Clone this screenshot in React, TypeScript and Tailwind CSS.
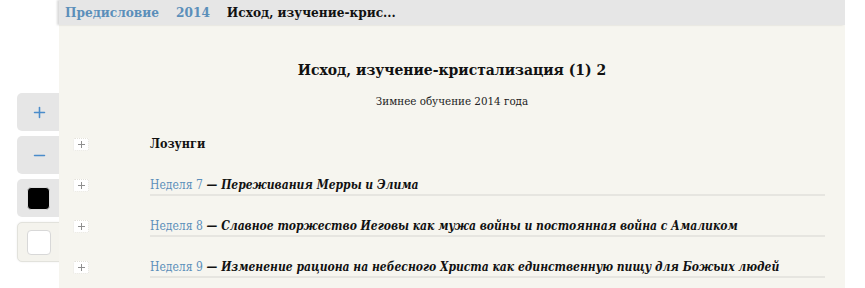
import { Plus, Minus } from "lucide-react"

const serif = { fontFamily: '"DejaVu Serif Condensed", "DejaVu Serif", Georgia, serif' }

const weeks = [
    { n: 7, title: "Переживания Мерры и Элима" },
    { n: 8, title: "Славное торжество Иеговы как мужа войны и постоянная война с Амаликом" },
    { n: 9, title: "Изменение рациона на небесного Христа как единственную пищу для Божьих людей" },
]

function ExpandBox() {
    return (
        <div className="flex h-[13px] w-[16px] items-center justify-center rounded-[2px] border border-dotted border-[#e4e2da] bg-white">
            <svg width="7" height="7" viewBox="0 0 7 7">
                <path d="M3.5 0v7M0 3.5h7" stroke="#8f8f8f" strokeWidth="1" />
            </svg>
        </div>
    )
}

export default function App() {
    return (
        <div className="relative h-[288px] w-[865px] overflow-hidden bg-white" style={serif}>
            {/* Панель инструментов слева */}
            <div className="absolute left-[17px] top-[93px] flex w-[60px] flex-col gap-[5px]">
                <button className="flex h-[38px] items-center rounded-[5px] bg-[#e6e6e6] pl-[14px]">
                    <Plus className="size-[17px] text-[#4a8ccb]" strokeWidth={2.2} />
                </button>
                <button className="flex h-[38px] items-center rounded-[5px] bg-[#e6e6e6] pl-[14px]">
                    <Minus className="size-[17px] text-[#4a8ccb]" strokeWidth={2.2} />
                </button>
                <button className="flex h-[38px] items-center rounded-[5px] bg-[#e6e6e6] pl-[10px]">
                    <span className="block h-[23px] w-[23px] rounded-[4px] border border-[#ddd] bg-black" />
                </button>
                <button className="flex h-[40px] items-center rounded-[5px] border border-[#e2e2dc] bg-[#f4f3ed] pl-[9px] shadow-[0_0_2px_rgba(0,0,0,0.08)]">
                    <span className="block h-[25px] w-[24px] rounded-[4px] border border-[#d8d8d8] bg-white" />
                </button>
            </div>

            {/* Основная панель */}
            <div className="absolute left-[59px] top-0 h-[288px] w-[786px] bg-[#f6f5ef]">
                <div className="flex h-[25px] items-center gap-[17px] bg-[#e6e6e6] pl-[6px] text-[13.5px] font-bold shadow-[-2px_0_2px_rgba(0,0,0,0.15)]">
                    <span className="text-[#5b8fba]">Предисловие</span>
                    <span className="text-[#5b8fba]">2014</span>
                    <span className="text-[#111]">Исход, изучение-крис...</span>
                </div>

                <h1 className="mt-[35px] text-center text-[15.5px] font-bold leading-[20px] text-[#111]">
                    Исход, изучение-кристализация (1) 2
                </h1>
                <p className="mt-[14px] text-center text-[11.5px] leading-[14px] text-[#222]">
                    Зимнее обучение 2014 года
                </p>

                <div className="mt-[28px] flex flex-col">
                    <div className="flex h-[41px] items-start">
                        <div className="w-[91px] pl-[14px] pt-[2px]">
                            <ExpandBox />
                        </div>
                        <span className="text-[12.5px] font-bold leading-[16px] text-[#111]">Лозунги</span>
                    </div>
                    {weeks.map((w) => (
                        <div key={w.n} className="flex h-[41px] items-start">
                            <div className="w-[91px] pl-[14px] pt-[2px]">
                                <ExpandBox />
                            </div>
                            <div className="w-[675px] border-b-2 border-[#e6e5e0] pb-[1px] text-[12px] leading-[16px]">
                                <span className="text-[#5b8fba]">Неделя {w.n}</span>
                                <span className="font-bold italic text-[#111]"> — {w.title}</span>
                            </div>
                        </div>
                    ))}
                </div>
            </div>
        </div>
    )
}
